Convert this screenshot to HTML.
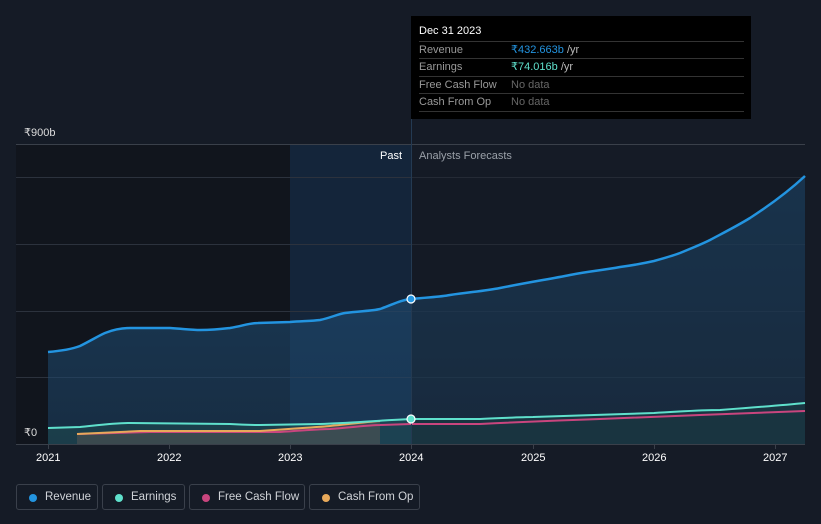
<!DOCTYPE html>
<html><head><meta charset="utf-8"><style>
body{margin:0;width:821px;height:524px;background:#151b26;font-family:"Liberation Sans",sans-serif;overflow:hidden;position:relative}
.t{position:absolute;font-size:11px;color:#fff}
.pill{position:absolute;top:484px;height:26px;border:1px solid #3a404b;border-radius:3px;box-sizing:border-box;color:#d0d3d8;font-size:11.5px;line-height:25px;padding-left:38px}
.pill i{position:absolute;left:12px;top:9px;width:8px;height:8px;border-radius:50%}
.tip{position:absolute;left:411px;top:16px;width:340px;height:103px;background:#000}
.row{position:absolute;left:8px;width:325px;border-top:1px solid #333;font-size:11px;color:#999;height:17px;line-height:17px}
.row span{position:absolute;left:92px}
</style></head><body>
<svg width="821" height="524" style="position:absolute;left:0;top:0">
<defs><linearGradient id="g" x1="0" x2="0" y1="0" y2="1"><stop offset="0" stop-color="#1e4a70" stop-opacity=".75"/><stop offset="1" stop-color="#1e4a70" stop-opacity=".45"/></linearGradient></defs>
<rect x="16" y="144" width="274" height="300" fill="#11151d"/>
<rect x="290" y="144" width="121" height="300" fill="#14253a"/>
<g stroke="#2c323d" stroke-width="1">
<line x1="16" x2="805" y1="144.5" y2="144.5" stroke="#3a404a"/>
<line x1="16" x2="805" y1="177.5" y2="177.5"/>
<line x1="16" x2="805" y1="244.5" y2="244.5"/>
<line x1="16" x2="805" y1="311.5" y2="311.5"/>
<line x1="16" x2="805" y1="377.5" y2="377.5"/>
</g>
<path d="M48,352 C60,351 72,349 80,346 C92,340 100,335 105,333 C115,329 122,328 130,328 L170,328 C185,329 192,330 200,330 C215,330 222,329 230,328 C242,326 250,323 258,323 L290,322 C305,321 312,321 320,320 C330,318 338,314 345,313 C360,311 372,311 380,309 C392,305 400,300 411,299 C430,297 440,297 450,295 C470,292 485,291 500,288 C530,282 550,279 570,275 C590,271 605,270 620,267 C635,265 645,263 654,261 C665,258 672,256 680,253 C692,248 700,245 710,240 C725,232 737,226 750,218 C770,205 790,190 805,176 L805,444 L48,444Z" fill="url(#g)"/>
<path d="M48,428 L80,427 C100,425 115,423 130,423 L230,424 C245,425 252,425 260,425 L320,424 C350,423 370,421 411,419 L480,419 C505,418 520,417 533,417 L654,413 C690,411 700,410 720,410 C760,407 785,405 805,403 L805,444 L48,444Z" fill="#1f4e52" fill-opacity=".5"/>
<path d="M77,434 L140,431 L260,431 C300,428 320,427 330,426 C350,424 365,422 380,421 L380,444 L77,444Z" fill="#5a5552" fill-opacity=".5"/>
<rect x="412" y="170" width="393" height="274" fill="#151b26" fill-opacity=".3"/>
<path d="M48,352 C60,351 72,349 80,346 C92,340 100,335 105,333 C115,329 122,328 130,328 L170,328 C185,329 192,330 200,330 C215,330 222,329 230,328 C242,326 250,323 258,323 L290,322 C305,321 312,321 320,320 C330,318 338,314 345,313 C360,311 372,311 380,309 C392,305 400,300 411,299 C430,297 440,297 450,295 C470,292 485,291 500,288 C530,282 550,279 570,275 C590,271 605,270 620,267 C635,265 645,263 654,261 C665,258 672,256 680,253 C692,248 700,245 710,240 C725,232 737,226 750,218 C770,205 790,190 805,176" fill="none" stroke="#2394e0" stroke-width="2.5"/>
<path d="M77,434 L150,432 L280,432 C310,430 320,429 330,429 C355,427 370,425 380,425 L411,424 L480,424 C540,421 570,420 600,419 C650,417 680,416 700,415 C750,413 780,412 805,411" fill="none" stroke="#c9457e" stroke-width="2"/>
<path d="M77,434 L140,431 L260,431 C300,428 320,427 330,426 C350,424 365,422 380,421" fill="none" stroke="#e8a95a" stroke-width="2"/>
<path d="M48,428 L80,427 C100,425 115,423 130,423 L230,424 C245,425 252,425 260,425 L320,424 C350,423 370,421 411,419 L480,419 C505,418 520,417 533,417 L654,413 C690,411 700,410 720,410 C760,407 785,405 805,403" fill="none" stroke="#5fe0cc" stroke-width="2"/>
<line x1="411.5" x2="411.5" y1="16" y2="444" stroke="#243a52"/>
<line x1="16" x2="805" y1="444.5" y2="444.5" stroke="#3a404a"/>
<g stroke="#3a404a"><line x1="48.5" x2="48.5" y1="444" y2="449"/><line x1="169.5" x2="169.5" y1="444" y2="449"/><line x1="290.5" x2="290.5" y1="444" y2="449"/><line x1="411.5" x2="411.5" y1="444" y2="449"/><line x1="533.5" x2="533.5" y1="444" y2="449"/><line x1="654.5" x2="654.5" y1="444" y2="449"/><line x1="775.5" x2="775.5" y1="444" y2="449"/></g>
<circle cx="411" cy="299" r="4" fill="#2394e0" stroke="#fff" stroke-width="1.2"/>
<circle cx="411" cy="419" r="4" fill="#5fe0cc" stroke="#fff" stroke-width="1.2"/>
</svg>
<div class="t" style="left:24px;top:126px;color:#ddd">₹900b</div>
<div class="t" style="left:24px;top:426px;color:#ddd">₹0</div>
<div class="t" style="left:380px;top:150px">Past</div>
<div class="t" style="left:419px;top:150px;color:#9aa0a8">Analysts Forecasts</div>
<div class="t" style="left:36px;top:452px">2021</div>
<div class="t" style="left:157px;top:452px">2022</div>
<div class="t" style="left:278px;top:452px">2023</div>
<div class="t" style="left:399px;top:452px">2024</div>
<div class="t" style="left:521px;top:452px">2025</div>
<div class="t" style="left:642px;top:452px">2026</div>
<div class="t" style="left:763px;top:452px">2027</div>
<div class="tip">
<div style="position:absolute;left:8px;top:9px;color:#fff;font-size:11px">Dec 31 2023</div>
<div class="row" style="top:25px">Revenue<span style="color:#2394e0">₹432.663b <b style="font-weight:normal;color:#bbb">/yr</b></span></div>
<div class="row" style="top:42px">Earnings<span style="color:#5fe0cc">₹74.016b <b style="font-weight:normal;color:#bbb">/yr</b></span></div>
<div class="row" style="top:60px">Free Cash Flow<span style="color:#666">No data</span></div>
<div class="row" style="top:77px">Cash From Op<span style="color:#666">No data</span></div>
<div style="position:absolute;left:8px;top:95px;width:325px;border-top:1px solid #333"></div>
</div>
<div class="pill" style="left:16px;width:82px;padding-left:28px"><i style="background:#2394e0"></i>Revenue</div>
<div class="pill" style="left:102px;width:83px;padding-left:28px"><i style="background:#5fe0cc"></i>Earnings</div>
<div class="pill" style="left:189px;width:116px;padding-left:28px"><i style="background:#c9457e"></i>Free Cash Flow</div>
<div class="pill" style="left:309px;width:111px;padding-left:28px"><i style="background:#e8a95a"></i>Cash From Op</div>
</body></html>
